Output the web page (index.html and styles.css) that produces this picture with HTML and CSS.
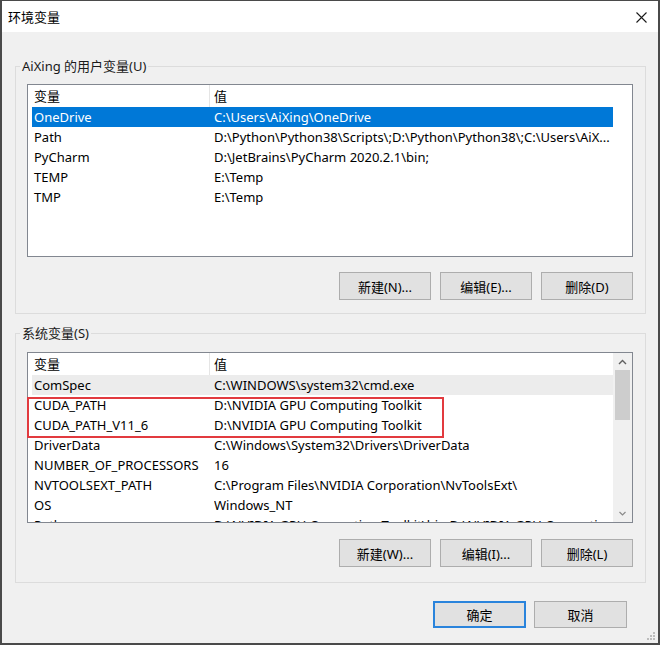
FILE: index.html
```html
<!DOCTYPE html>
<html lang="zh-CN">
<head>
<meta charset="utf-8">
<title>环境变量</title>
<link rel="stylesheet" href="styles.css">
</head>
<body>
<div class="window">
  <div class="titlebar">
    <span class="title">环境变量</span>
    <svg class="close" width="11" height="11" viewBox="0 0 11 11"><path d="M0.5 0.5 L10.5 10.5 M10.5 0.5 L0.5 10.5" stroke="#1a1a1a" stroke-width="1.1" fill="none"/></svg>
  </div>
  <div class="content">
    <div class="group group-user">
      <span class="group-title">AiXing 的用户变量(U)</span>
      <div class="lv lv-user">
        <div class="lv-main">
          <div class="lv-head"><div class="h1">变量</div><div class="h2">值</div></div>
          <div class="row selected"><div class="c1">OneDrive</div><div class="c2">C:\Users\AiXing\OneDrive</div></div>
          <div class="row"><div class="c1">Path</div><div class="c2">D:\Python\Python38\Scripts\;D:\Python\Python38\;C:\Users\AiX...</div></div>
          <div class="row"><div class="c1">PyCharm</div><div class="c2">D:\JetBrains\PyCharm 2020.2.1\bin;</div></div>
          <div class="row"><div class="c1">TEMP</div><div class="c2">E:\Temp</div></div>
          <div class="row"><div class="c1">TMP</div><div class="c2">E:\Temp</div></div>
        </div>
        <div class="lv-side"></div>
      </div>
      <div class="btn-row">
        <button class="btn">新建(N)...</button>
        <button class="btn">编辑(E)...</button>
        <button class="btn">删除(D)</button>
      </div>
    </div>

    <div class="group group-sys">
      <span class="group-title">系统变量(S)</span>
      <div class="lv lv-sys">
        <div class="lv-main">
          <div class="lv-head"><div class="h1">变量</div><div class="h2">值</div></div>
          <div class="row inactive"><div class="c1">ComSpec</div><div class="c2">C:\WINDOWS\system32\cmd.exe</div></div>
          <div class="row"><div class="c1">CUDA_PATH</div><div class="c2">D:\NVIDIA GPU Computing Toolkit</div></div>
          <div class="row"><div class="c1">CUDA_PATH_V11_6</div><div class="c2">D:\NVIDIA GPU Computing Toolkit</div></div>
          <div class="row"><div class="c1">DriverData</div><div class="c2">C:\Windows\System32\Drivers\DriverData</div></div>
          <div class="row"><div class="c1">NUMBER_OF_PROCESSORS</div><div class="c2">16</div></div>
          <div class="row"><div class="c1">NVTOOLSEXT_PATH</div><div class="c2">C:\Program Files\NVIDIA Corporation\NvToolsExt\</div></div>
          <div class="row"><div class="c1">OS</div><div class="c2">Windows_NT</div></div>
          <div class="row"><div class="c1">Path</div><div class="c2">D:\NVIDIA GPU Computing Toolkit\bin;D:\NVIDIA GPU Computing...</div></div>
        </div>
        <div class="lv-side scrollbar">
          <svg class="arrow" width="19" height="17" viewBox="0 0 19 17"><path d="M6 11 L9.5 7.5 L13 11" stroke="#606060" stroke-width="1.4" fill="none"/></svg>
          <div class="thumb"></div>
          <div class="track"></div>
          <svg class="arrow" width="19" height="17" viewBox="0 0 19 17"><path d="M6.5 7 L9.5 10 L12.5 7" stroke="#8a8a8a" stroke-width="1.2" fill="none"/></svg>
        </div>
        <div class="highlight"></div>
      </div>
      <div class="btn-row btn-row-sys">
        <button class="btn">新建(W)...</button>
        <button class="btn">编辑(I)...</button>
        <button class="btn">删除(L)</button>
      </div>
    </div>

    <div class="footer">
      <button class="btn btn-foot btn-default">确定</button>
      <button class="btn btn-foot">取消</button>
    </div>
  </div>
  <svg class="grip" width="10" height="10" viewBox="0 0 10 10">
    <rect x="7" y="1" width="2" height="2" fill="#bcbcbc"/>
    <rect x="4" y="4" width="2" height="2" fill="#bcbcbc"/>
    <rect x="7" y="4" width="2" height="2" fill="#bcbcbc"/>
    <rect x="1" y="7" width="2" height="2" fill="#bcbcbc"/>
    <rect x="4" y="7" width="2" height="2" fill="#bcbcbc"/>
    <rect x="7" y="7" width="2" height="2" fill="#bcbcbc"/>
  </svg>
</div>
</body>
</html>
```

FILE: styles.css
```css
* { box-sizing: border-box; }

html, body {
  margin: 0;
  padding: 0;
  background: #5a5a5a;
}

body {
  font-family: "Noto Sans", "Noto Sans CJK SC", sans-serif;
  font-size: 13px;
  color: #000;
}

.window {
  position: relative;
  width: 660px;
  height: 645px;
  border-style: solid;
  border-color: #4a4a4a;
  border-width: 1px 2px 2px 2px;
  background: #f0f0f0;
  display: flex;
  flex-direction: column;
}

.titlebar {
  height: 31px;
  background: #fff;
  display: flex;
  align-items: center;
  justify-content: space-between;
  padding: 0 11px 0 6px;
}

.title {
  font-size: 13px;
  line-height: 16px;
  padding-top: 1px;
}

.close { display: block; margin-top: 1px; }

.content {
  display: flex;
  flex-direction: column;
  padding: 0 12px 0 13px;
}

.group {
  position: relative;
  border: 1px solid #dcdcdc;
  padding: 17px 12px 13px 11px;
}

.group-user { margin-top: 34px; }

.group-sys {
  margin-top: 19px;
  padding-top: 18px;
  padding-bottom: 15px;
}

.group-title {
  position: absolute;
  top: -9px;
  left: 4px;
  padding: 0 2px;
  background: #f0f0f0;
  line-height: 16px;
  color: #1a1a1a;
}

.lv {
  position: relative;
  display: flex;
  border: 1px solid #828790;
  background: #fff;
}

.lv-user { height: 173px; }
.lv-sys { height: 171px; }

.lv-main {
  flex: 1;
  overflow: hidden;
}

.lv-side {
  width: 19px;
  background: #fff;
}

.lv-head {
  display: flex;
  height: 22px;
  align-items: center;
}

.h1 {
  width: 182px;
  height: 22px;
  line-height: 22px;
  padding-left: 6px;
  border-right: 1px solid #e5e5e5;
}

.h2 {
  padding-left: 4px;
  line-height: 22px;
}

.row {
  display: flex;
  align-items: center;
  height: 20px;
  width: 581px;
  margin-left: 4px;
  white-space: nowrap;
}

.c1 {
  width: 182px;
  padding-left: 2px;
}

.c2 {
  flex: 1;
  overflow: hidden;
}

.row.selected {
  background: #0078d7;
  color: #fff;
}

.row.inactive {
  background: #ececec;
}

.scrollbar {
  background: #f0f0f0;
  display: flex;
  flex-direction: column;
}

.arrow { display: block; flex: none; }

.thumb {
  height: 50px;
  margin: 0 2px;
  background: #cdcdcd;
  flex: none;
}

.track { flex: 1; }

.highlight {
  position: absolute;
  left: -1px;
  top: 44px;
  width: 417px;
  height: 41px;
  border: 2px solid #e23a3f;
}

.btn-row {
  display: flex;
  justify-content: flex-end;
  gap: 9px;
  margin-top: 15px;
}

.btn-row-sys { margin-top: 16px; }

.btn {
  width: 92px;
  height: 28px;
  padding: 0;
  background: #e1e1e1;
  border: 1px solid #adadad;
  font-family: "Noto Sans", "Noto Sans CJK SC", sans-serif;
  font-size: 13px;
  color: #000;
}

.footer {
  display: flex;
  justify-content: flex-end;
  gap: 8px;
  margin-top: 18px;
  padding-right: 19px;
}

.btn-foot {
  width: 93px;
  height: 27px;
}

.btn-default {
  border: 1px solid #2a84dc;
  box-shadow: inset 0 0 0 1px #2a84dc;
}

.grip {
  position: absolute;
  right: 2px;
  bottom: 2px;
}
```
